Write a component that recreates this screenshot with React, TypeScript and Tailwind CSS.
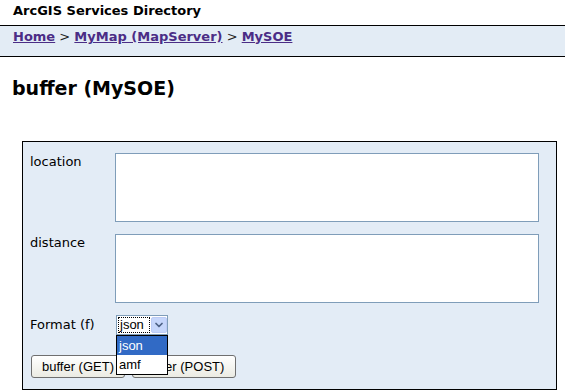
import { ChevronDown } from "lucide-react";

export default function App() {
  return (
    <div className="relative h-[392px] w-[565px] overflow-hidden bg-white font-['DejaVu_Sans',Verdana,sans-serif] text-black">
      {/* Top title */}
      <div className="h-[25px] pl-[13px] pt-[3px] text-[13px] font-bold leading-[16px]">
        ArcGIS Services Directory
      </div>

      {/* Breadcrumb band */}
      <div className="h-[32px] border-y border-black bg-[#e3ecf5] pl-[13px] pt-[3px] text-[13px] font-bold leading-[16px] text-[#242424]">
        <a href="#" className="text-[#4b2d86] underline">Home</a>
        <span className="font-normal"> &gt; </span>
        <a href="#" className="text-[#4b2d86] underline">MyMap (MapServer)</a>
        <span className="font-normal"> &gt; </span>
        <a href="#" className="text-[#4b2d86] underline">MySOE</a>
      </div>

      {/* Heading */}
      <h2 className="pl-[12px] pt-[19px] text-[19px] font-bold leading-[24px]">buffer (MySOE)</h2>

      {/* Form */}
      <div className="ml-[22px] mt-[41px] w-[535px] border border-black bg-[#e3ecf6] pb-[11px] pl-[7px] pt-[11px] text-[13px]">
        <div className="flex">
          <label className="w-[85px] pt-[1px] leading-[16px]">location</label>
          <div className="h-[69px] w-[424px] border border-[#7f9db9] bg-white" />
        </div>
        <div className="mt-[12px] flex">
          <label className="w-[85px] pt-[1px] leading-[16px]">distance</label>
          <div className="h-[69px] w-[424px] border border-[#7f9db9] bg-white" />
        </div>

        <div className="mt-[12px] flex items-center">
          <label className="w-[86px] leading-[16px]">Format (f)</label>
          <div className="relative">
            <div className="flex h-[20px] w-[52px] items-center border border-[#7f9db9] bg-white pl-[1px]">
              <span className="flex h-[16px] w-[32px] items-center border border-dotted border-black pl-[1px] font-['Liberation_Sans',Arial,sans-serif] text-[13px] leading-[14px]">
                json
              </span>
              <span className="ml-[1px] flex h-[16px] w-[16px] items-center justify-center rounded-[2px] border border-[#bccbf5] bg-[#c6d6fb]">
                <ChevronDown size={12} strokeWidth={3.5} className="text-[#4d6185]" />
              </span>
            </div>
            {/* open dropdown list */}
            <div className="absolute left-0 top-[20px] z-10 w-[52px] border border-black bg-white font-['Liberation_Sans',Arial,sans-serif] text-[13px] leading-[19px]">
              <div className="bg-[#316ac5] pl-[2px] text-white">json</div>
              <div className="pl-[2px]">amf</div>
            </div>
          </div>
        </div>

        <div className="mt-[20px] flex gap-[7px] pl-[1px] font-['Liberation_Sans',Arial,sans-serif] text-[13px]">
          <button className="h-[23px] w-[94px] rounded-[3px] border border-[#6f6f6f] bg-gradient-to-b from-white to-[#ebebe3] leading-[20px]">
            buffer (GET)
          </button>
          <button className="h-[23px] w-[104px] rounded-[3px] border border-[#6f6f6f] bg-gradient-to-b from-white to-[#ebebe3] leading-[20px]">
            buffer (POST)
          </button>
        </div>
      </div>
    </div>
  );
}
